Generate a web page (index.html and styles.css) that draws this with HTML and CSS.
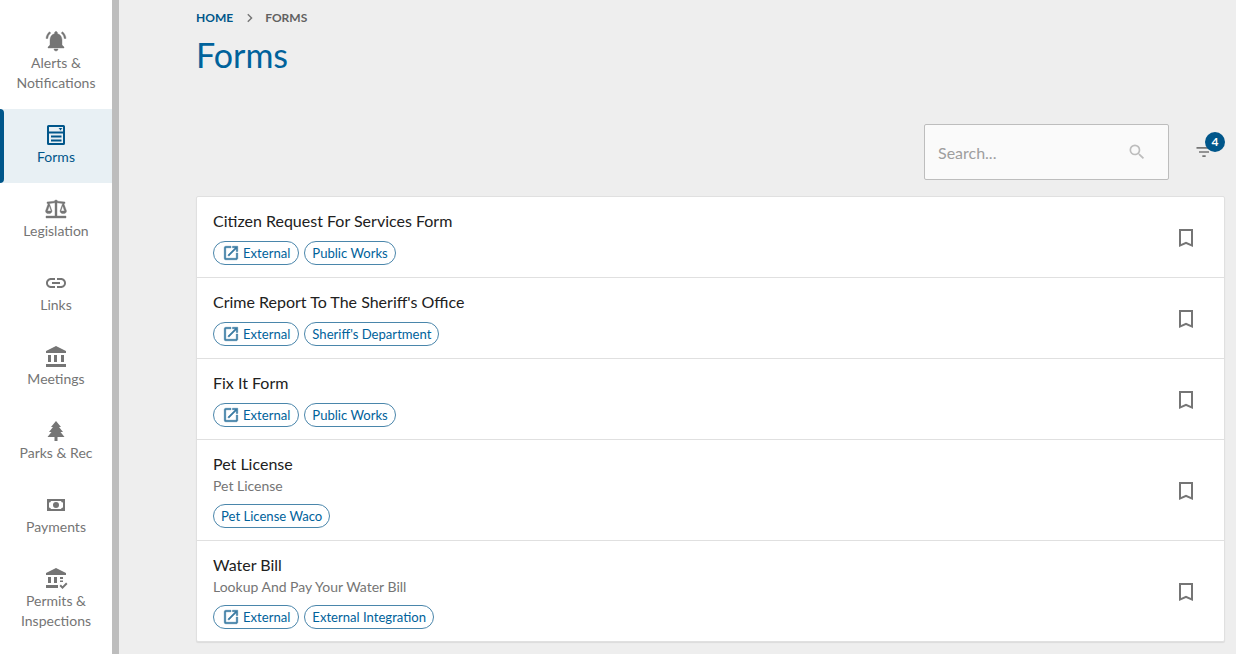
FILE: index.html
```html
<!DOCTYPE html>
<html lang="en">
<head>
<meta charset="utf-8">
<title>Forms</title>
<link rel="stylesheet" href="styles.css">
</head>
<body>
<div class="app">
  <nav class="side">
    <a class="nav-item"><svg class="nav-icon bold" viewBox="0 0 24 24"><path d="M12 22c1.100 0 2-.9 2-2h-4c0 1.100.9 2 2 2zm6-6v-5c0-3.070-1.630-5.640-4.500-6.320V4c0-.83-.67-1.500-1.500-1.500s-1.500.67-1.500 1.500v.68C7.640 5.360 6 7.920 6 11v5l-2 2v1h16v-1l-2-2zM6.800 4.100 5.500 2.800C3.500 4.400 2.200 6.800 2 9.500h1.800c.2-2.200 1.300-4.100 3-5.400zM20.200 9.500H22c-.2-2.700-1.500-5.100-3.500-6.700l-1.300 1.300c1.700 1.300 2.800 3.200 3 5.400z"/></svg><span>Alerts &amp; Notifications</span></a>
    <a class="nav-item active"><svg class="nav-icon" viewBox="0 0 24 24"><path fill-rule="evenodd" d="M4.500 2h15A1.500 1.500 0 0 1 21 3.500v17a1.500 1.500 0 0 1-1.500 1.500h-15A1.500 1.500 0 0 1 3 20.500v-17A1.500 1.500 0 0 1 4.500 2zM5 4v4.500h14V4H5zm0 6.500V20h14v-9.500H5zm2 2h10.500v2H7v-2zm0 4h10.500v2H7v-2zM14.500 5h4l-1.300 1.200v1h-1.400v-1L14.500 5z"/></svg><span>Forms</span></a>
    <a class="nav-item"><svg class="nav-icon bold" viewBox="0 0 24 24"><path fill-rule="evenodd" d="M12 3a1.800 1.800 0 0 1 1.700 1.200L21 5v1.500h-1.200L22.500 14c0 1.700-1.500 2.600-3.200 2.600S16 15.700 16 14l2.600-7.500-5.600-.7V19h9v2H2v-2h9V5.800l-5.600.7L8 14c0 1.700-1.500 2.600-3.300 2.600S1.500 15.700 1.500 14l2.700-7.500H3V5l7.300-.8A1.800 1.800 0 0 1 12 3zM5.300 8.700 3.500 14h3.600L5.300 8.700zm13.400 0L16.900 14h3.600l-1.800-5.300z"/></svg><span>Legislation</span></a>
    <a class="nav-item"><svg class="nav-icon" viewBox="0 0 24 24"><path d="M3.900 12c0-1.710 1.390-3.100 3.100-3.100h4V7H7c-2.760 0-5 2.240-5 5s2.240 5 5 5h4v-1.900H7c-1.710 0-3.100-1.390-3.100-3.100zM8 13h8v-2H8v2zm9-6h-4v1.900h4c1.710 0 3.100 1.390 3.100 3.100s-1.390 3.100-3.100 3.100h-4V17h4c2.760 0 5-2.240 5-5s-2.240-5-5-5z"/></svg><span>Links</span></a>
    <a class="nav-item"><svg class="nav-icon" viewBox="0 0 24 24"><path d="M4 10v7h3v-7H4zm6 0v7h3v-7h-3zM2 22h20v-3H2v3zm15-12v7h3v-7h-3zM12 1 2 6v2h20V6L12 1z"/></svg><span>Meetings</span></a>
    <a class="nav-item"><svg class="nav-icon" viewBox="0 0 24 24"><path d="M12 2l5 6h-2l4 5h-2.500l4 5h-7v4h-3v-4h-7l4-5H5l4-5H7z"/></svg><span>Parks &amp; Rec</span></a>
    <a class="nav-item"><svg class="nav-icon" viewBox="0 0 24 24"><path fill-rule="evenodd" d="M3 6h18v12H3V6zm2 3.500v5a2 2 0 0 1 2 1.500h10a2 2 0 0 1 2-1.500v-5A2 2 0 0 1 17 8H7a2 2 0 0 1-2 1.500zM12 9a3 3 0 1 1 0 6 3 3 0 0 1 0-6z"/></svg><span>Payments</span></a>
    <a class="nav-item"><svg class="nav-icon" viewBox="0 0 24 24"><path d="M4 10v6h3v-6H4zm6 0v6h3v-6h-3zM2 21h12v-3H2v3zM12 1 2 6v2h20V6L12 1zM16 10h3v2h-3zM16 13.500h3v1.500h-3zM15.500 19l1.400-1.400 1.600 1.600 3.600-3.700L23.500 17l-5 5-3-3z"/></svg><span>Permits &amp; Inspections</span></a>
  </nav>
  <main class="main">
    <div class="crumbs"><a class="crumb-link">Home</a><svg class="crumb-sep" viewBox="0 0 24 24"><path d="M8.600 5.400 10.600 3.400l8.600 8.600-8.600 8.600-2-2L15.200 12z"/></svg><span>Forms</span></div>
    <h1 class="title">Forms</h1>
    <div class="tools">
      <div class="search"><span class="placeholder">Search...</span><svg class="search-icon" viewBox="0 0 24 24"><path d="M15.500 14h-.79l-.28-.27A6.470 6.470 0 0 0 16 9.500 6.500 6.500 0 1 0 9.500 16c1.610 0 3.090-.59 4.230-1.570l.27.28v.79l5 4.990L20.490 19l-4.990-5zm-6 0C7.010 14 5 11.990 5 9.500S7.010 5 9.500 5 14 7.010 14 9.500 11.990 14 9.500 14z"/></svg></div>
      <div class="filter"><svg class="filter-icon" viewBox="0 0 24 24"><path d="M10 18h4v-2h-4v2zM3 6v2h18V6H3zm3 7h12v-2H6v2z"/></svg><span class="badge">4</span></div>
    </div>
    <section class="list">
      <article class="row">
        <div class="row-body">
          <h2 class="row-title">Citizen Request For Services Form</h2>
          <div class="chips">
            <span class="chip chip-ext"><svg class="chip-icon" viewBox="0 0 24 24"><path d="M19 19H5V5h7V3H5a2 2 0 0 0-2 2v14a2 2 0 0 0 2 2h14c1.100 0 2-.9 2-2v-7h-2v7zM14 3v2h3.590l-9.830 9.830 1.410 1.410L19 6.410V10h2V3h-7z"/></svg>External</span>
            <span class="chip">Public Works</span>
          </div>
        </div>
        <svg class="mark" viewBox="0 0 24 24"><path d="M5 3h14v18l-7-3-7 3V3zm2 2v13l5-2.180L17 18V5H7z" fill-rule="evenodd"/></svg>
      </article>
      <article class="row">
        <div class="row-body">
          <h2 class="row-title">Crime Report To The Sheriff's Office</h2>
          <div class="chips">
            <span class="chip chip-ext"><svg class="chip-icon" viewBox="0 0 24 24"><path d="M19 19H5V5h7V3H5a2 2 0 0 0-2 2v14a2 2 0 0 0 2 2h14c1.100 0 2-.9 2-2v-7h-2v7zM14 3v2h3.590l-9.830 9.830 1.410 1.410L19 6.410V10h2V3h-7z"/></svg>External</span>
            <span class="chip">Sheriff's Department</span>
          </div>
        </div>
        <svg class="mark" viewBox="0 0 24 24"><path d="M5 3h14v18l-7-3-7 3V3zm2 2v13l5-2.180L17 18V5H7z" fill-rule="evenodd"/></svg>
      </article>
      <article class="row">
        <div class="row-body">
          <h2 class="row-title">Fix It Form</h2>
          <div class="chips">
            <span class="chip chip-ext"><svg class="chip-icon" viewBox="0 0 24 24"><path d="M19 19H5V5h7V3H5a2 2 0 0 0-2 2v14a2 2 0 0 0 2 2h14c1.100 0 2-.9 2-2v-7h-2v7zM14 3v2h3.590l-9.830 9.830 1.410 1.410L19 6.410V10h2V3h-7z"/></svg>External</span>
            <span class="chip">Public Works</span>
          </div>
        </div>
        <svg class="mark" viewBox="0 0 24 24"><path d="M5 3h14v18l-7-3-7 3V3zm2 2v13l5-2.180L17 18V5H7z" fill-rule="evenodd"/></svg>
      </article>
      <article class="row">
        <div class="row-body">
          <h2 class="row-title">Pet License</h2>
          <p class="row-desc">Pet License</p>
          <div class="chips">
            <span class="chip">Pet License Waco</span>
          </div>
        </div>
        <svg class="mark" viewBox="0 0 24 24"><path d="M5 3h14v18l-7-3-7 3V3zm2 2v13l5-2.180L17 18V5H7z" fill-rule="evenodd"/></svg>
      </article>
      <article class="row">
        <div class="row-body">
          <h2 class="row-title">Water Bill</h2>
          <p class="row-desc">Lookup And Pay Your Water Bill</p>
          <div class="chips">
            <span class="chip chip-ext"><svg class="chip-icon" viewBox="0 0 24 24"><path d="M19 19H5V5h7V3H5a2 2 0 0 0-2 2v14a2 2 0 0 0 2 2h14c1.100 0 2-.9 2-2v-7h-2v7zM14 3v2h3.590l-9.830 9.830 1.410 1.410L19 6.410V10h2V3h-7z"/></svg>External</span>
            <span class="chip">External Integration</span>
          </div>
        </div>
        <svg class="mark" viewBox="0 0 24 24"><path d="M5 3h14v18l-7-3-7 3V3zm2 2v13l5-2.180L17 18V5H7z" fill-rule="evenodd"/></svg>
      </article>
    </section>
  </main>
</div>
</body>
</html>
```
FILE: styles.css
```css
* { box-sizing: border-box; }
html, body { margin: 0; height: 100%; overflow: hidden; }
body { font-family: Lato, "Open Sans", sans-serif; background: #eeeeee; color: #212121; }
.app { display: flex; height: 654px; }

.side { flex: 0 0 119px; background: #fff; border-right: 7px solid #bdbdbd; padding-top: 15px; }
.nav-item { position: relative; display: flex; flex-direction: column; align-items: center; padding: 14px 8px 16px; font-size: 14px; line-height: 20px; color: #757575; text-align: center; }
.nav-item span { display: block; }
.nav-icon { width: 24px; height: 24px; fill: #757575; display: block; flex: none; }
.bold { stroke: #757575; stroke-width: .4; }
.active { background: #e8f0f4; color: #00568a; }
.active::before { content: ""; position: absolute; left: 0; top: 0; bottom: 0; width: 4px; background: #00568a; border-radius: 0 4px 4px 0; }
.active .nav-icon { fill: #00568a; }

.main { flex: 1; padding: 0 11px 0 77px; min-width: 0; }
.crumbs { display: flex; align-items: center; height: 35px; font-size: 12px; font-weight: 700; text-transform: uppercase; color: #616161; }
.crumb-link { color: #00568a; }
.crumb-sep { width: 12px; height: 12px; fill: #757575; margin: 0 10px; }
.title { margin: 0; font-size: 34px; line-height: 39px; font-weight: 400; color: #00629b; }

.tools { display: flex; justify-content: flex-end; align-items: center; margin-top: 50px; margin-bottom: 16px; }
.search { width: 245px; height: 56px; display: flex; align-items: center; justify-content: space-between; padding: 0 21px 0 13px; background: #fafafa; border: 1px solid #bdbdbd; border-radius: 2px; }
.placeholder { font-size: 16px; color: #9e9e9e; }
.search-icon { width: 20px; height: 20px; fill: #bdbdbd; }
.filter { position: relative; width: 56px; height: 56px; display: flex; align-items: center; justify-content: flex-end; padding-right: 11px; }
.filter-icon { width: 20px; height: 20px; fill: #757575; }
.badge { position: absolute; top: 8px; right: 0; width: 20px; height: 20px; border-radius: 50%; background: #00568a; color: #fff; font-size: 12px; font-weight: 700; line-height: 20px; text-align: center; }

.list { background: #fff; border: 1px solid #e0e0e0; border-radius: 2px; box-shadow: 0 1px 1px rgba(0, 0, 0, .08); }
.row { display: flex; align-items: center; justify-content: space-between; padding: 14px 26px 12px 16px; }
.row + .row { border-top: 1px solid #e0e0e0; }
.row-body { min-width: 0; }
.row-title { margin: 0; font-size: 16px; line-height: 20px; font-weight: 400; color: #212121; }
.row-desc { margin: 2px 0 -2px; font-size: 14px; line-height: 20px; color: #757575; }
.chips { display: flex; gap: 5px; margin-top: 10px; }
.chip { display: inline-flex; align-items: center; height: 24px; padding: 0 7px; border: 1px solid #4a86ab; border-radius: 12px; font-size: 13.1px; color: #00629b; white-space: nowrap; }
.chip-ext { padding-right: 8px; }
.chip-icon { width: 18px; height: 18px; fill: #3a7ba3; stroke: #3a7ba3; stroke-width: .6; margin: 0 3px 0 1px; }
.mark { width: 24px; height: 24px; fill: #757575; flex: none; }
```
